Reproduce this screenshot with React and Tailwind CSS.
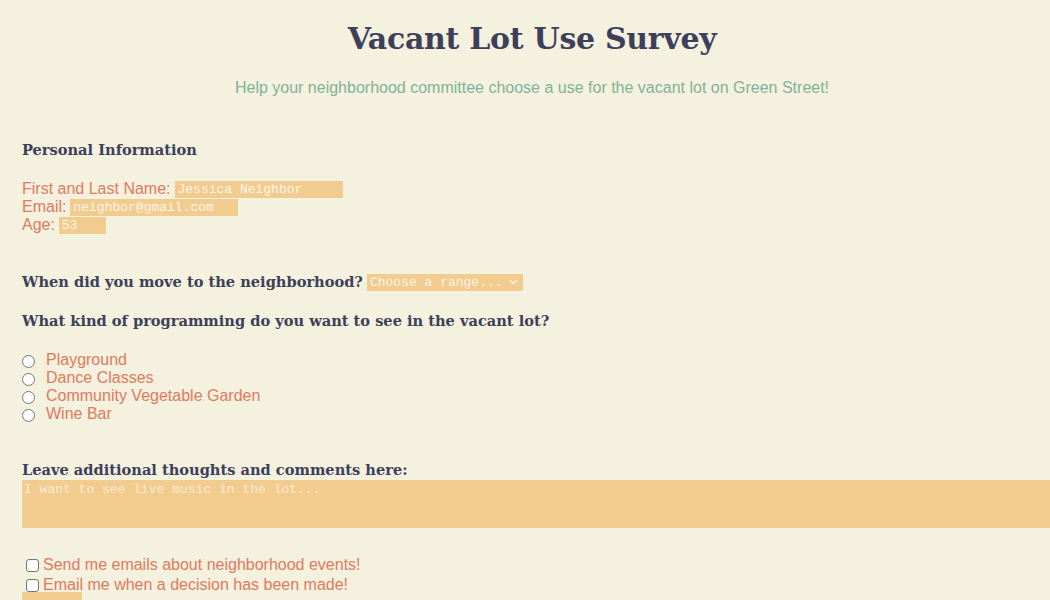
// Vacant lot survey — a single static form page.
import React from 'react';

const serif = "font-['DejaVu_Serif',Georgia,serif]";
const sans = "font-['Liberation_Sans',Arial,sans-serif]";
const mono = "font-['Liberation_Mono','Courier_New',monospace]";

const field =
  `h-[17px] border-0 bg-[#f2cc8f] px-[3px] text-[13px] leading-[17px] text-[#faf5e8] outline-none ${mono}`;

const options = ['Playground', 'Dance Classes', 'Community Vegetable Garden', 'Wine Bar'];
const checks = [
  'Send me emails about neighborhood events!',
  'Email me when a decision has been made!',
];

export default function App() {
  return (
    <div className={`h-[600px] overflow-hidden bg-[#f4f1de] pl-[22px] pr-[8px] ${sans}`}>
      <h1 className={`pt-[19px] text-center text-[30px] font-bold leading-[40px] tracking-[-0.3px] text-[#3d405b] ${serif}`}>
        Vacant Lot Use Survey
      </h1>
      <p className="mt-[20px] text-center text-[16px] leading-[18px] text-[#81b29a]">
        Help your neighborhood committee choose a use for the vacant lot on Green Street!
      </p>

      <h4 className={`mt-[43px] text-[14.6px] font-bold leading-[20px] text-[#3d405b] ${serif}`}>
        Personal Information
      </h4>

      <div className="mt-[20px] flex flex-col text-[16px] leading-[18px] text-[#e07a5f]">
        <label className="flex h-[18px] items-center gap-[4px]">
          First and Last Name:
          <input readOnly defaultValue="Jessica Neighbor" className={`${field} w-[168px]`} />
        </label>
        <label className="flex h-[18px] items-center gap-[4px]">
          Email:
          <input readOnly defaultValue="neighbor@gmail.com" className={`${field} w-[168px]`} />
        </label>
        <label className="flex h-[18px] items-center gap-[4px]">
          Age:
          <input readOnly defaultValue="53" className={`${field} w-[47px]`} />
        </label>
      </div>

      <div className="mt-[38px] flex items-center gap-[4px]">
        <span className={`text-[14.6px] font-bold leading-[20px] text-[#3d405b] ${serif}`}>
          When did you move to the neighborhood?
        </span>
        <span className={`${field} flex w-[156px] items-center justify-between pr-[5px]`}>
          Choose a range...
          <svg width="9" height="6" viewBox="0 0 9 6" fill="none" stroke="#faf5e8" strokeWidth="1.5">
            <path d="M1 1l3.5 3.5L8 1" />
          </svg>
        </span>
      </div>

      <h4 className={`mt-[19px] text-[14.6px] font-bold leading-[20px] text-[#3d405b] ${serif}`}>
        What kind of programming do you want to see in the vacant lot?
      </h4>

      <div className="mt-[20px] flex flex-col text-[16px] leading-[18px] text-[#e07a5f]">
        {options.map((o) => (
          <label key={o} className="flex h-[18px] items-center gap-[11px]">
            <input
              type="radio"
              name="program"
              className="mt-[3px] h-[13px] w-[13px] appearance-none rounded-full border border-[#767676] bg-white"
            />
            {o}
          </label>
        ))}
      </div>

      <h4 className={`mt-[37px] text-[14.6px] font-bold leading-[20px] text-[#3d405b] ${serif}`}>
        Leave additional thoughts and comments here:
      </h4>
      <textarea
        readOnly
        placeholder="I want to see live music in the lot..."
        className={`block h-[48px] w-[1040px] resize-none border-0 bg-[#f2cc8f] px-[2px] py-[2px] text-[13px] leading-[15px] outline-none placeholder:text-[#f8ead0] ${mono}`}
      />

      <div className="mt-[27px] flex flex-col text-[16px] leading-[20px] text-[#e07a5f]">
        {checks.map((c) => (
          <label key={c} className="flex h-[20px] items-center gap-[4px] pl-[4px]">
            <input
              type="checkbox"
              className="h-[13px] w-[13px] appearance-none rounded-[3px] border border-[#767676] bg-white"
            />
            {c}
          </label>
        ))}
      </div>
      <button
        type="button"
        className={`-mt-[3px] block h-[24px] w-[60px] bg-[#f2cc8f] pt-[4px] text-[13px] leading-[20px] text-[#faf5e8] ${mono}`}
      >
        Submit
      </button>
    </div>
  );
}
